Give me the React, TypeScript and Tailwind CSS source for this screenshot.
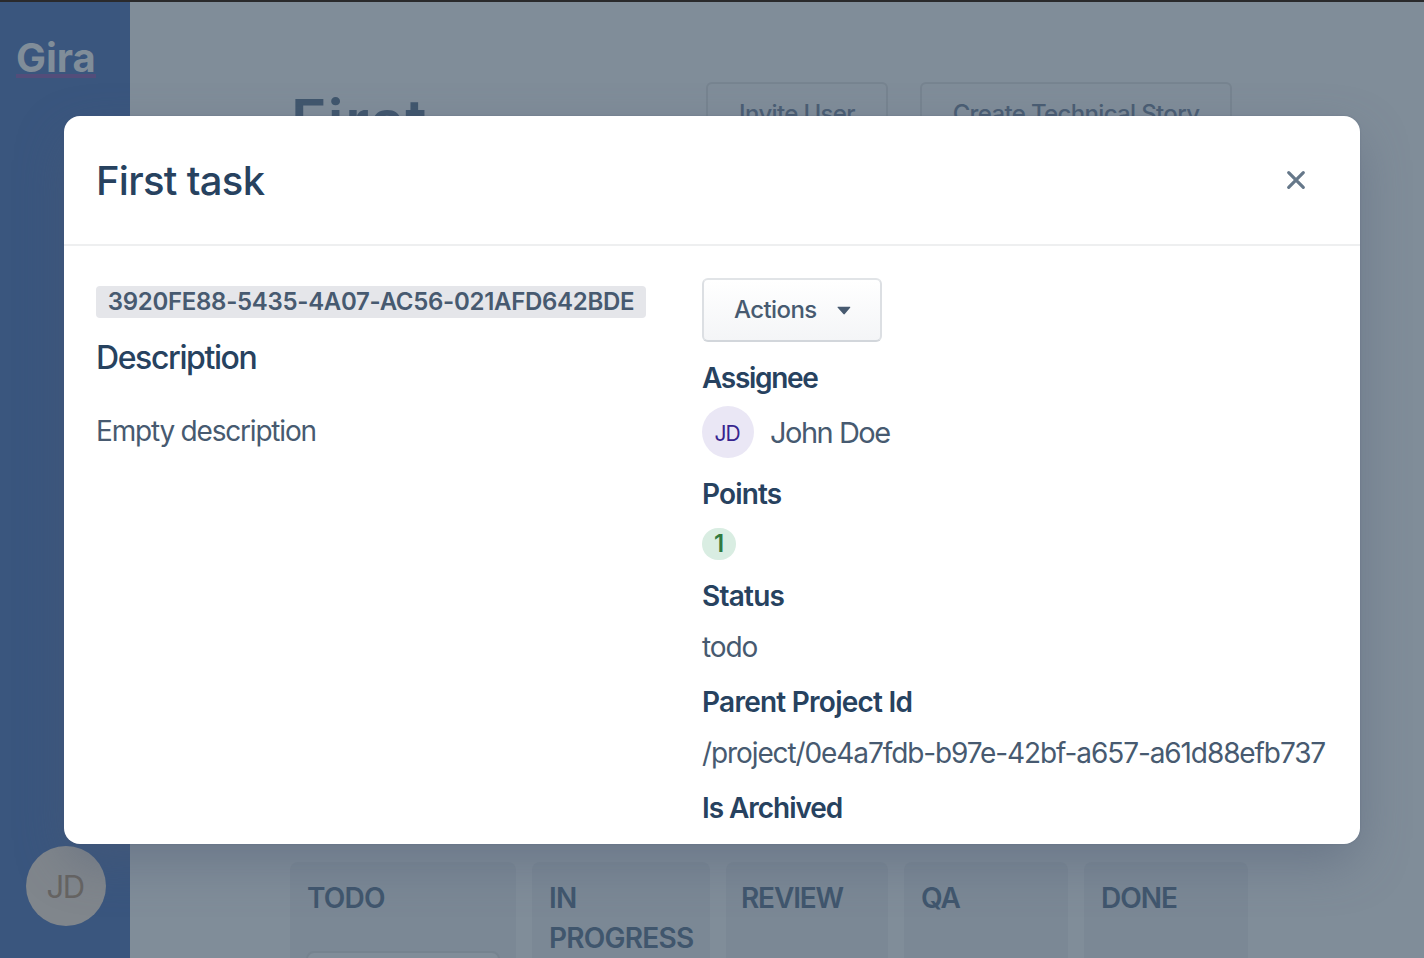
import React from "react";

const columns = [
  { name: "TODO", style: "w-[226px] pl-4", heading: "pl-px tracking-[-0.8px]", card: true },
  { name: "IN PROGRESS", style: "w-[178px] pl-4", heading: "pl-px tracking-[-0.75px]", card: false },
  { name: "REVIEW", style: "w-[162px] pl-[15px]", heading: "tracking-[-1.15px]", card: false },
  { name: "QA", style: "w-[164px] pl-[17px]", heading: "tracking-[-1px]", card: false },
  { name: "DONE", style: "w-[164px] pl-[17px]", heading: "tracking-[-1px]", card: false },
];

function Sidebar() {
  return (
    <aside className="flex h-full w-[130px] shrink-0 flex-col justify-between bg-[#3a567e] pt-8 pb-8">
      <div className="flex pl-4">
        <span className="flex h-[44px] items-center border-b-4 border-[#534d7a] pt-2 text-[40px] leading-[48px] font-bold tracking-[0px] text-[#808d99]">
          Gira
        </span>
      </div>
      <div className="ml-[26px] flex h-20 w-20 items-center justify-center rounded-full bg-[#80868c] pt-[2px] text-[31px] tracking-[-1.5px] text-[#666462]">
        <span className="-ml-[2px]">JD</span>
      </div>
    </aside>
  );
}

function Board() {
  return (
    <main className="flex h-full min-w-0 flex-1 flex-col justify-between pt-20 pl-40">
      <div className="flex items-start">
        <h1 className="w-[416px] pl-px text-[60px] leading-[78px] font-semibold tracking-[1.6px] text-[#40566d]">First</h1>
        <button className="h-[64px] w-[182px] rounded-md border-2 border-[#778490] text-[24px] font-medium tracking-[-0.65px] text-[#4a5d73]">
          Invite User
        </button>
        <button className="ml-8 h-[64px] w-[312px] rounded-md border-2 border-[#778490] text-[24px] font-medium tracking-[-0.65px] text-[#4a5d73]">
          Create Technical Story
        </button>
      </div>
      <div className="flex h-[96px] gap-4 overflow-hidden">
        {columns.map((c) => (
          <section key={c.name} className={`${c.style} shrink-0 rounded-t-lg bg-[#7b8895] pt-4`}>
            <h2 className={`${c.heading} h-[73px] text-[28px] leading-10 font-semibold text-[#40566d]`}>{c.name}</h2>
            {c.card && <div className="h-20 w-[194px] rounded-lg border-2 border-[#76838f] bg-[#808d99]" />}
          </section>
        ))}
      </div>
    </main>
  );
}

function Label({ className, children }: { className: string; children: React.ReactNode }) {
  return <h3 className={`${className} text-[28px] leading-[41px] font-semibold text-[#27425f]`}>{children}</h3>;
}

function TaskDialog() {
  return (
    <div
      role="dialog"
      className="flex h-[728px] w-[1296px] flex-col overflow-hidden rounded-2xl bg-white text-[#475a70] shadow-[0_0_2px_rgba(72,86,112,0.3),0_20px_52px_-4px_rgba(76,90,115,0.46)]"
    >
      <header className="flex h-[130px] shrink-0 items-center justify-between border-b-2 border-[#eeeff0] pr-[53px] pl-8">
        <h2 className="pt-[2px] text-[40px] leading-[48px] font-medium tracking-[-0.7px] text-[#27425f]">First task</h2>
        <button aria-label="Close">
          <svg width="22" height="22" viewBox="0 0 22 22" fill="none" stroke="#66788a" strokeWidth="3.2" strokeLinecap="round">
            <path d="M3.7 3.7l14.6 14.6M18.3 3.7L3.7 18.3" />
          </svg>
        </button>
      </header>
      <div className="flex pt-8 pl-8">
        <section className="w-[606px] shrink-0 pt-2">
          <div className="flex h-8 w-[550px] items-center justify-center rounded bg-[#e5e6ea] text-[24px] font-semibold tracking-[-0.3px] whitespace-nowrap">
            3920FE88-5435-4A07-AC56-021AFD642BDE
          </div>
          <h3 className="mt-[15px] text-[32px] leading-[49px] font-medium tracking-[-1.4px] text-[#27425f]">Description</h3>
          <p className="mt-[28px] text-[28px] leading-[42px] tracking-[-1.2px]">Empty description</p>
        </section>
        <section className="whitespace-nowrap">
          <button className="flex h-16 w-[180px] items-center rounded-md border-2 border-t-[#e1e4e7] border-r-[#dcdfe3] border-b-[#d2d6db] border-l-[#dcdfe3] bg-linear-to-b from-white to-[#f4f5f7] pl-[30px] text-[24px] font-medium tracking-[-0.6px]">
            <span className="w-[103px] text-left">Actions</span>
            <svg width="14" height="9" viewBox="0 0 14 9" fill="#475a70">
              <path d="M1.2.7h11.4c.7 0 .9.6.5 1.1L7.8 8.1c-.4.5-1 .5-1.4 0L.8 1.8C.3 1.3.5.7 1.2.7z" />
            </svg>
          </button>
          <div className="mt-4">
            <Label className="tracking-[-1.3px]">Assignee</Label>
          </div>
          <div className="mt-[7px] flex h-[52px] items-center gap-4">
            <span className="flex h-[52px] w-[52px] items-center justify-center rounded-full bg-[#eae7f5] pt-[3px] text-[21px] tracking-[-1px] text-[#37248f]">
              <span className="-ml-[2px]">JD</span>
            </span>
            <span className="pt-[2px] text-[29px] tracking-[-1.5px]">John Doe</span>
          </div>
          <div className="mt-4">
            <Label className="tracking-[-0.85px]">Points</Label>
          </div>
          <div className="mt-[13px] flex h-8 w-[34px] items-center justify-center rounded-full bg-[#d9ede2] text-[24px] font-semibold text-[#317a40]">
            1
          </div>
          <div className="mt-4">
            <Label className="tracking-[-0.75px]">Status</Label>
          </div>
          <p className="mt-[9px] text-[28px] leading-[42px] tracking-[-1.1px]">todo</p>
          <div className="mt-[14px]">
            <Label className="tracking-[-0.75px]">Parent Project Id</Label>
          </div>
          <p className="mt-[9px] text-[28px] leading-[42px] tracking-[-1.1px]">/project/0e4a7fdb-b97e-42bf-a657-a61d88efb737</p>
          <div className="mt-[14px]">
            <Label className="tracking-[-1.05px]">Is Archived</Label>
          </div>
        </section>
      </div>
    </div>
  );
}

export default function App() {
  return (
    <div className="relative h-[958px] w-[1424px] overflow-hidden border-t-2 border-[#2a2a2c] bg-[#808d99] font-['Inter',sans-serif]">
      <div className="flex h-full">
        <Sidebar />
        <Board />
      </div>
      <div className="absolute inset-0 flex items-start justify-center pt-[114px]">
        <TaskDialog />
      </div>
    </div>
  );
}
